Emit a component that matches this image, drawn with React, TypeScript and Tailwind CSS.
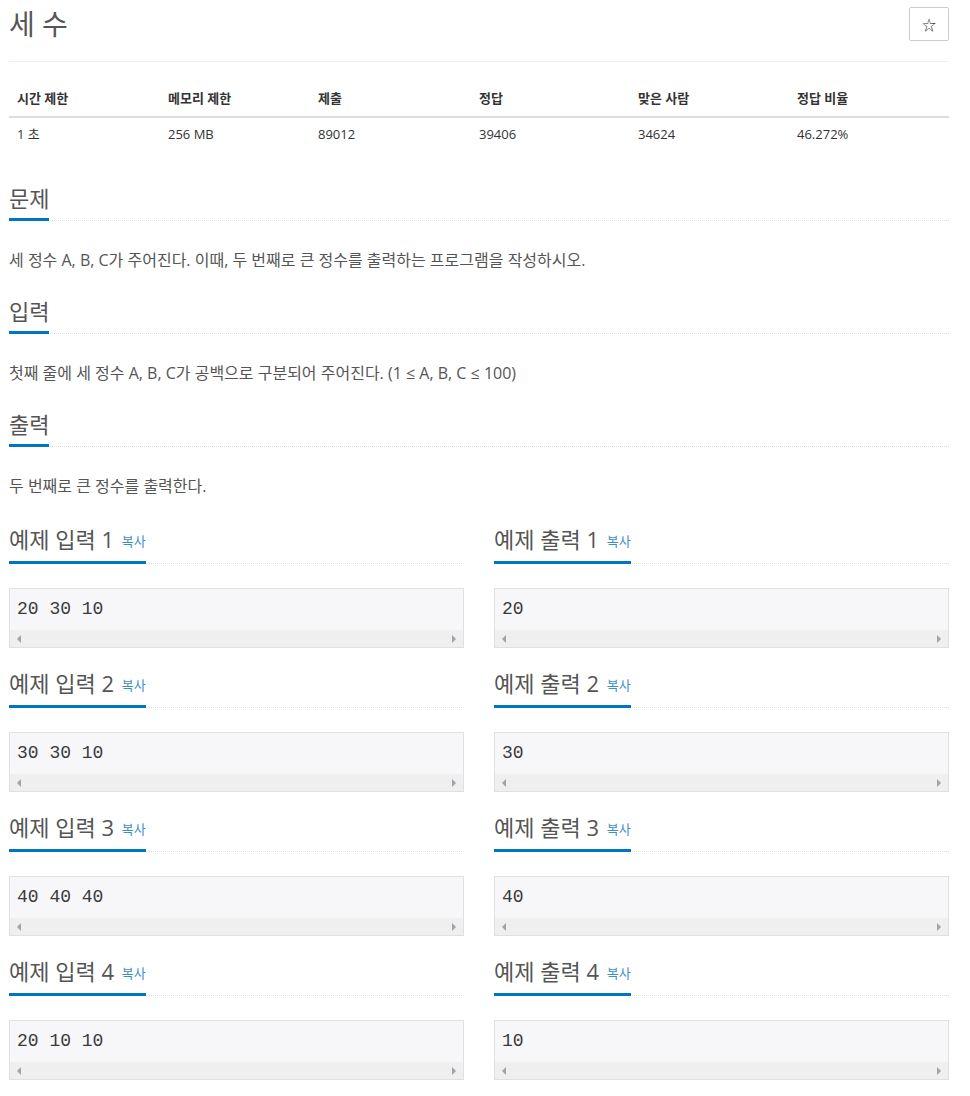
const FONT = "font-['Open_Sans','Noto_Sans_CJK_KR',sans-serif]";

const stats = [
  { label: '시간 제한', value: '1 초', w: 'w-[151px]' },
  { label: '메모리 제한', value: '256 MB', w: 'w-[150px]' },
  { label: '제출', value: '89012', w: 'w-[161px]' },
  { label: '정답', value: '39406', w: 'w-[159px]' },
  { label: '맞은 사람', value: '34624', w: 'w-[159px]' },
  { label: '정답 비율', value: '46.272%', w: 'flex-1' },
];

const samples = [
  { input: '20 30 10', output: '20' },
  { input: '30 30 10', output: '30' },
  { input: '40 40 40', output: '40' },
  { input: '20 10 10', output: '10' },
];

function Headline({ children, tall }: { children: React.ReactNode; tall?: boolean }) {
  return (
    <div className="border-b border-dotted border-[#ddd]">
      <h2
        className={`inline-flex ${tall ? 'h-[38px]' : 'h-[36px]'} items-start -mb-px border-b-[3px] border-solid border-[#0076c0] text-[22px] leading-[26px] text-[#555]`}
      >
        {children}
      </h2>
    </div>
  );
}

function SampleHeading({ title }: { title: string }) {
  return (
    <Headline tall>
      <span className="whitespace-pre">{title} </span>
      <span className="ml-[2px] mt-[7px] text-[13px] leading-[16px] text-[#428bca]">복사</span>
    </Headline>
  );
}

function SampleBox({ text }: { text: string }) {
  return (
    <div className="mt-[24px] border border-[#dfdfe4] bg-[#f7f7f9]">
      <div className="flex h-[41px] items-center pl-[7px] font-['Liberation_Mono',monospace] text-[18px] text-[#3a3a3a]">
        {text}
      </div>
      <div className="flex h-[17px] items-center justify-between bg-[#efefef] px-[7px]">
        <svg width="4" height="8" viewBox="0 0 4 8">
          <polygon points="4,0 0,4 4,8" fill="#a3a3a3" />
        </svg>
        <svg width="4" height="8" viewBox="0 0 4 8">
          <polygon points="0,0 4,4 0,8" fill="#a3a3a3" />
        </svg>
      </div>
    </div>
  );
}

export default function App() {
  return (
    <div className={`${FONT} min-h-screen bg-white`}>
      <div className="ml-[9px] w-[940px] pb-[16px]">
        {/* Header */}
        <div className="flex items-start justify-between">
          <h1 className="mt-[8px] text-[28px] leading-[33px] text-[#555]">세 수</h1>
          <button className="mt-[7px] flex h-[34px] w-[40px] items-center justify-center rounded-[2px] border border-[#ccc] bg-white text-[14px] text-[#333]">
            ☆
          </button>
        </div>
        <div className="mt-[20px] border-t border-[#eee]" />

        {/* Stats table */}
        <div className="mt-[20px]">
          <div className="flex h-[36px] border-b-2 border-[#ddd]">
            {stats.map((s) => (
              <div key={s.label} className={`${s.w} flex items-center px-[8px] text-[13px] font-bold text-[#333]`}>
                {s.label}
              </div>
            ))}
          </div>
          <div className="flex h-[34px]">
            {stats.map((s) => (
              <div key={s.label} className={`${s.w} flex items-center px-[8px] text-[13px] text-[#333]`}>
                {s.value}
              </div>
            ))}
          </div>
        </div>

        {/* Problem */}
        <div className="mt-[33px]">
          <Headline>문제</Headline>
          <p className="mt-[29px] text-[16px] leading-[20px] text-[#555]">
            세 정수 A, B, C가 주어진다. 이때, 두 번째로 큰 정수를 출력하는 프로그램을 작성하시오.
          </p>
        </div>

        <div className="mt-[28px]">
          <Headline>입력</Headline>
          <p className="mt-[29px] text-[16px] leading-[20px] text-[#555]">
            첫째 줄에 세 정수 A, B, C가 공백으로 구분되어 주어진다. (1 ≤ A, B, C ≤ 100)
          </p>
        </div>

        <div className="mt-[28px]">
          <Headline>출력</Headline>
          <p className="mt-[29px] text-[16px] leading-[20px] text-[#555]">두 번째로 큰 정수를 출력한다.</p>
        </div>

        {/* Samples */}
        <div className="mt-[30px] flex flex-col gap-[22px]">
          {samples.map((s, i) => (
            <div key={i} className="grid grid-cols-2 gap-[30px]">
              <div>
                <SampleHeading title={`예제 입력 ${i + 1}`} />
                <SampleBox text={s.input} />
              </div>
              <div>
                <SampleHeading title={`예제 출력 ${i + 1}`} />
                <SampleBox text={s.output} />
              </div>
            </div>
          ))}
        </div>
      </div>
    </div>
  );
}
